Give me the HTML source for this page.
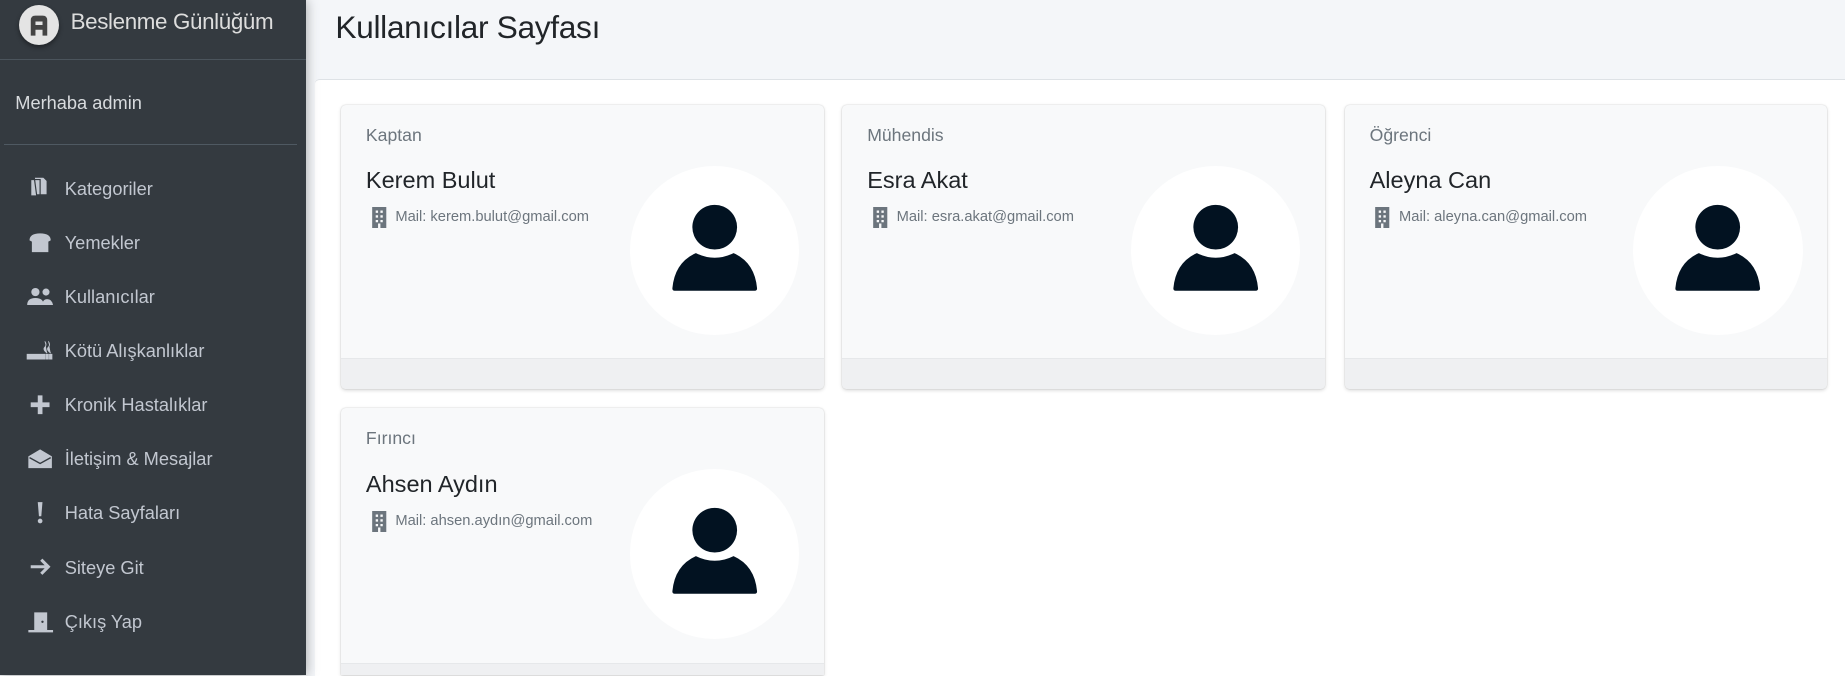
<!DOCTYPE html>
<html><head><meta charset="utf-8"><style>
html{zoom:1.17666;overflow:hidden}
body{margin:0;width:1568px;height:574px;overflow:hidden;background:#f4f6f9;font-family:"Liberation Sans",sans-serif;position:relative}
.sb{position:absolute;left:0;top:0;width:260px;height:574px;background:#343a40;box-shadow:0 0 10px rgba(0,0,0,.35);z-index:2}
.logo{position:absolute;left:16px;top:4px;width:34px;height:34px;border-radius:50%;background:#e4e4e4;box-shadow:0 2px 4px rgba(0,0,0,.4)}
.brand{position:absolute;left:60px;top:8px;color:#ddd;font-size:19px;font-weight:300;letter-spacing:-.3px}
.hl{position:absolute;left:0;width:260px;top:50px;border-top:1px solid #4b545c}
.hello{position:absolute;left:13px;top:78px;color:#d8dbde;font-size:15.5px}
.hl2{position:absolute;left:3px;width:249px;top:122px;border-top:1px solid #4f5962}
.mi{position:absolute;left:55px;color:#c2c7d0;font-size:15.5px}
.ic{position:absolute;left:22px;width:24px;height:20px}
.title{position:absolute;left:285px;top:8px;font-size:27px;color:#212529;font-weight:300;letter-spacing:-.3px}
.main{position:absolute;left:268px;top:67px;width:1300px;height:507px;background:#fff;border-top:1px solid #dee2e6;border-radius:4px 0 0 0}
.card{position:absolute;width:410px;height:242px;background:#f8f9fa;border-radius:4px;box-shadow:0 0 1px rgba(0,0,0,.2),0 1px 3px rgba(0,0,0,.15);overflow:hidden}
.ft{position:absolute;left:0;right:0;bottom:0;height:26px;background:#eff0f2;border-top:1px solid #e6e8ea}
.role{position:absolute;left:21px;top:17px;color:#6c757d;font-size:15px}
.name{position:absolute;left:21px;top:53px;color:#212529;font-size:20px}
.mail{position:absolute;left:46px;top:89px;color:#6c757d;font-size:12.5px}
.bld{position:absolute;left:25px;top:87px}
.av{position:absolute;left:245px;top:52px;width:144px;height:144px;border-radius:50%;background:#fff}
</style></head><body>
<div class="sb">
 <div class="logo"><svg width="34" height="34" viewBox="0 0 34 34"><path d="M10 26V13q0-4 4-4h6q4 0 4 4v13h-4v-5h-6v5zM14 17h6v-3h-6z" fill="#444"/></svg></div>
 <div class="brand">Beslenme Günlüğüm</div>
 <div class="hl"></div>
 <div class="hello">Merhaba admin</div>
 <div class="hl2"></div>
 <svg class="ic" style="top:150px" viewBox="0 0 24 20"><path d="M4 3h8v14H4zM7 1h8l3 3v12H9z" fill="#c2c7d0" stroke="#343a40" stroke-width="1"/></svg>
 <div class="mi" style="top:151px">Kategoriler</div>
 <svg class="ic" style="top:196px" viewBox="0 0 24 20"><path d="M3 8q0-6 9-6t9 6l-2 1v9H5V9z" fill="#c2c7d0"/></svg>
 <div class="mi" style="top:197px">Yemekler</div>
 <svg class="ic" style="top:242px" viewBox="0 0 24 20"><circle cx="8" cy="6" r="3.5" fill="#c2c7d0"/><circle cx="17" cy="6" r="3" fill="#c2c7d0"/><path d="M1 17q0-6 7-6t7 6zM14 17q0-5 4-5t5 5z" fill="#c2c7d0"/></svg>
 <div class="mi" style="top:243px">Kullanıcılar</div>
 <svg class="ic" style="top:288px" viewBox="0 0 24 20"><path d="M1 13h15v4H1zM17 13h2v4h-2zM20 13h2v4h-2zM16 2q2 3 0 5t2 5M19 2q2 3 0 5t2 5" fill="#c2c7d0" stroke="#c2c7d0" stroke-width=".8"/></svg>
 <div class="mi" style="top:289px">Kötü Alışkanlıklar</div>
 <svg class="ic" style="top:334px" viewBox="0 0 24 20"><path d="M10 2h4v6h6v4h-6v6h-4v-6H4V8h6z" fill="#c2c7d0"/></svg>
 <div class="mi" style="top:335px">Kronik Hastalıklar</div>
 <svg class="ic" style="top:380px" viewBox="0 0 24 20"><path d="M2 8l10-6 10 6v10H2z" fill="#c2c7d0"/><path d="M3 9l9 5 9-5" stroke="#343a40" fill="none" stroke-width="1.2"/></svg>
 <div class="mi" style="top:381px">İletişim &amp; Mesajlar</div>
 <svg class="ic" style="top:426px" viewBox="0 0 24 20"><path d="M10 1h4l-1 12h-2z" fill="#c2c7d0"/><circle cx="12" cy="17" r="2" fill="#c2c7d0"/></svg>
 <div class="mi" style="top:427px">Hata Sayfaları</div>
 <svg class="ic" style="top:472px" viewBox="0 0 24 20"><path d="M4 10h15M13 4l6 6-6 6" stroke="#c2c7d0" stroke-width="2.6" fill="none"/></svg>
 <div class="mi" style="top:473px">Siteye Git</div>
 <svg class="ic" style="top:518px" viewBox="0 0 24 20"><path d="M7 2h11v15H7zM2 17h21v2H2z" fill="#c2c7d0"/><circle cx="14" cy="10" r="1" fill="#343a40"/></svg>
 <div class="mi" style="top:519px">Çıkış Yap</div>
</div>
<div class="title">Kullanıcılar Sayfası</div>
<div class="main"></div>

<div class="card" style="left:290px;top:89px"><div class="role">Kaptan</div><div class="name">Kerem Bulut</div>
<svg class="bld" width="14" height="18" viewBox="0 0 14 18"><path d="M1 0h12v18H8v-4H6v4H1z" fill="#6c757d"/><path d="M4 3h2v2H4zM8 3h2v2H8zM4 7h2v2H4zM8 7h2v2H8zM4 11h2v2H4zM8 11h2v2H8z" fill="#f8f9fa"/></svg>
<div class="mail">Mail: kerem.bulut@gmail.com</div>
<div class="av"><svg width="144" height="144" viewBox="0 0 144 144"><circle cx="72" cy="52" r="19" fill="#021221"/><path d="M56 74q16 8 32 0q18 8 20 30q0 2-2 2H38q-2 0-2-2q2-22 20-30z" fill="#021221"/></svg></div>
<div class="ft"></div></div>

<div class="card" style="left:716px;top:89px"><div class="role">Mühendis</div><div class="name">Esra Akat</div>
<svg class="bld" width="14" height="18" viewBox="0 0 14 18"><path d="M1 0h12v18H8v-4H6v4H1z" fill="#6c757d"/><path d="M4 3h2v2H4zM8 3h2v2H8zM4 7h2v2H4zM8 7h2v2H8zM4 11h2v2H4zM8 11h2v2H8z" fill="#f8f9fa"/></svg>
<div class="mail">Mail: esra.akat@gmail.com</div>
<div class="av"><svg width="144" height="144" viewBox="0 0 144 144"><circle cx="72" cy="52" r="19" fill="#021221"/><path d="M56 74q16 8 32 0q18 8 20 30q0 2-2 2H38q-2 0-2-2q2-22 20-30z" fill="#021221"/></svg></div>
<div class="ft"></div></div>

<div class="card" style="left:1143px;top:89px"><div class="role">Öğrenci</div><div class="name">Aleyna Can</div>
<svg class="bld" width="14" height="18" viewBox="0 0 14 18"><path d="M1 0h12v18H8v-4H6v4H1z" fill="#6c757d"/><path d="M4 3h2v2H4zM8 3h2v2H8zM4 7h2v2H4zM8 7h2v2H8zM4 11h2v2H4zM8 11h2v2H8z" fill="#f8f9fa"/></svg>
<div class="mail">Mail: aleyna.can@gmail.com</div>
<div class="av"><svg width="144" height="144" viewBox="0 0 144 144"><circle cx="72" cy="52" r="19" fill="#021221"/><path d="M56 74q16 8 32 0q18 8 20 30q0 2-2 2H38q-2 0-2-2q2-22 20-30z" fill="#021221"/></svg></div>
<div class="ft"></div></div>

<div class="card" style="left:290px;top:347px;height:227px;border-radius:4px 4px 0 0"><div class="role">Fırıncı</div><div class="name">Ahsen Aydın</div>
<svg class="bld" width="14" height="18" viewBox="0 0 14 18"><path d="M1 0h12v18H8v-4H6v4H1z" fill="#6c757d"/><path d="M4 3h2v2H4zM8 3h2v2H8zM4 7h2v2H4zM8 7h2v2H8zM4 11h2v2H4zM8 11h2v2H8z" fill="#f8f9fa"/></svg>
<div class="mail">Mail: ahsen.aydın@gmail.com</div>
<div class="av"><svg width="144" height="144" viewBox="0 0 144 144"><circle cx="72" cy="52" r="19" fill="#021221"/><path d="M56 74q16 8 32 0q18 8 20 30q0 2-2 2H38q-2 0-2-2q2-22 20-30z" fill="#021221"/></svg></div>
<div class="ft" style="height:10px"></div></div>
</body></html>
